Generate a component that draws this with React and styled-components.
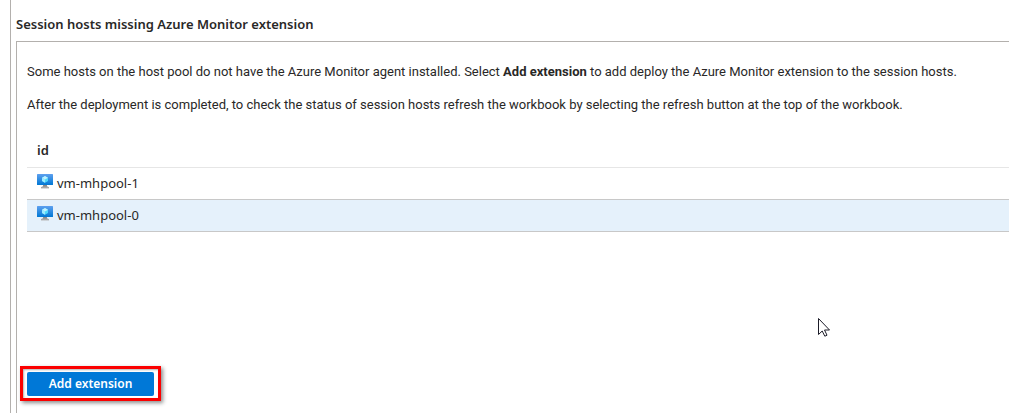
import React from "react";
import styled, { createGlobalStyle } from "styled-components";

const GlobalStyle = createGlobalStyle`
  * { box-sizing: border-box; }
  body {
    margin: 0;
    background: #fff;
    color: #292827;
    font-family: "Segoe UI", "Noto Sans", "Open Sans", sans-serif;
    font-size: 13px;
    line-height: 18px;
    overflow: hidden;
  }
`;

const Page = styled.main`
  min-height: 100vh;
  margin-left: 10px;
  padding: 15px 0 0 5px;
  border-left: 1px solid #b3b0ad;
  display: flex;
  flex-direction: column;
`;

const Title = styled.h2`
  margin: 0 0 8px;
  font-size: 13px;
  line-height: 18px;
  font-weight: 600;
`;

const Panel = styled.section`
  flex: 1;
  border: solid #b3b0ad;
  border-width: 1px 0 0 1px;
  display: flex;
  flex-direction: column;
`;

const Content = styled.div`
  flex: 1;
  padding: 21px 0 0 10px;
`;

const Paragraph = styled.p`
  margin: 0 0 15px;
  font-family: "Segoe UI", Roboto, sans-serif;
  font-size: 13px;
  white-space: nowrap;
`;

const Table = styled.table`
  width: 100%;
  margin-top: 18px;
  border-collapse: collapse;
`;

const HeadCell = styled.th`
  height: 35px;
  padding: 2px 10px 0;
  text-align: left;
  font-weight: 600;
  border-bottom: 1px solid #e6e6e6;
`;

const Row = styled.tr`
  background: ${(p) => (p.$selected ? "#e5f1fb" : "#fff")};
`;

const Cell = styled.td`
  height: 32px;
  padding: 0 10px;
  border-bottom: 1px solid #c8c8c8;
`;

const Host = styled.span`
  display: flex;
  align-items: center;
  gap: 4px;
`;

const HostIcon = styled.svg`
  width: 16px;
  height: 16px;
  margin-bottom: 4px;
`;

const Footer = styled.footer`
  display: flex;
  padding: 0 3px 12px;
`;

const Highlight = styled.div`
  padding: 3px 4px 2px;
  border: 3px solid #fb0000;
  box-shadow: 2px 2px 4px rgba(0, 0, 0, 0.45), inset 1px 1px 2px rgba(0, 0, 0, 0.3);
`;

const Button = styled.button`
  display: block;
  height: 24px;
  width: 127px;
  padding: 0;
  border: 0;
  border-radius: 2px;
  background: #0078d7;
  color: #fff;
  font: inherit;
  font-size: 12px;
  font-weight: 600;
`;

const Pointer = styled.svg`
  position: absolute;
  left: 817px;
  top: 317px;
  width: 14px;
  height: 21px;
`;

function VmIcon({ id }) {
  return (
    <HostIcon viewBox="0 0 16 16" aria-hidden="true">
      <defs>
        <linearGradient id={`${id}-screen`} x1="0" y1="0" x2="0" y2="1">
          <stop offset="0" stopColor="#5ea0ef" />
          <stop offset="1" stopColor="#0078d4" />
        </linearGradient>
        <linearGradient id={`${id}-stand`} x1="0" y1="0" x2="0" y2="1">
          <stop offset="0" stopColor="#707070" />
          <stop offset="1" stopColor="#b8b8b8" />
        </linearGradient>
      </defs>
      <path d="M6.200 11h3.600c0 2 .3 2.800 2.200 3v1.500H4V14c1.900-.2 2.200-1 2.200-3z" fill={`url(#${id}-stand)`} />
      <rect y="1" width="16" height="11" rx=".5" fill={`url(#${id}-screen)`} />
      <path d="M8 3l3 1.700v3.400L8 9.800 5 8.100V4.700z" fill="#50d8fa" />
      <path d="M8 3l3 1.700-3 1.700-3-1.700z" fill="#c3f1ff" />
      <path d="M5 4.700l3 1.700v3.400L5 8.100z" fill="#9cebff" />
    </HostIcon>
  );
}

const hosts = [
  { name: "vm-mhpool-1" },
  { name: "vm-mhpool-0", selected: true },
];

export default function App() {
  return (
    <>
      <GlobalStyle />
      <Page>
        <Title>Session hosts missing Azure Monitor extension</Title>
        <Panel>
          <Content>
            <Paragraph>
              Some hosts on the host pool do not have the Azure Monitor agent installed. Select{" "}
              <strong>Add extension</strong> to add deploy the Azure Monitor extension to the session hosts.
            </Paragraph>
            <Paragraph>
              After the deployment is completed, to check the status of session hosts refresh the workbook by
              selecting the refresh button at the top of the workbook.
            </Paragraph>
            <Table>
              <thead>
                <tr>
                  <HeadCell scope="col">id</HeadCell>
                </tr>
              </thead>
              <tbody>
                {hosts.map((host) => (
                  <Row key={host.name} $selected={host.selected}>
                    <Cell>
                      <Host>
                        <VmIcon id={host.name} />
                        {host.name}
                      </Host>
                    </Cell>
                  </Row>
                ))}
              </tbody>
            </Table>
          </Content>
          <Footer>
            <Highlight>
              <Button type="button">Add extension</Button>
            </Highlight>
          </Footer>
        </Panel>
      </Page>
      <Pointer viewBox="0 0 14 21" aria-hidden="true">
        <path
          d="M1.500 1.500v16l3.700-3.500 2.600 5.200 2.200-1-2.500-5.200h5z"
          fill="#fff"
          stroke="#1c1c28"
          strokeWidth="1"
        />
      </Pointer>
    </>
  );
}
